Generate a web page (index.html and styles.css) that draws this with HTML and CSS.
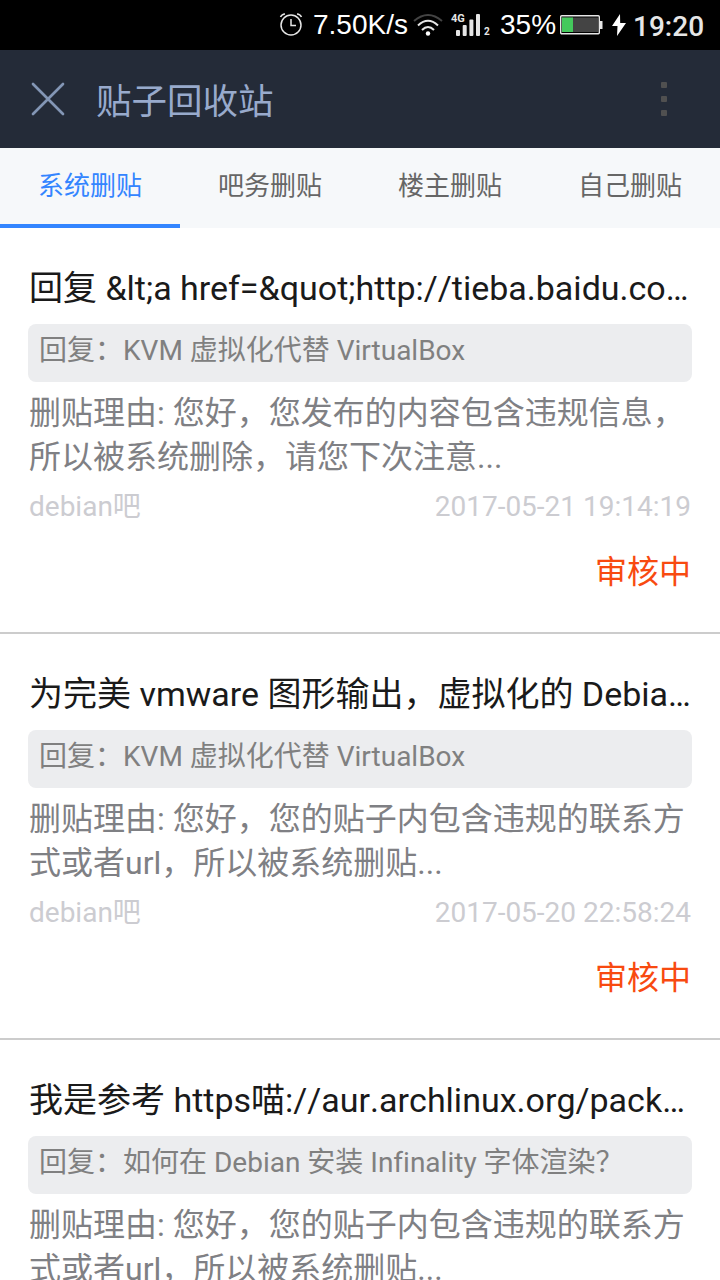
FILE: index.html
```html
<!DOCTYPE html>
<html lang="zh-CN">
<head>
<meta charset="utf-8">
<title>贴子回收站</title>
<link rel="stylesheet" href="styles.css">
</head>
<body>
<div class="screen">
  <div class="status-bar">
    <svg class="alarm" width="24" height="24" viewBox="0 0 24 24" fill="none" stroke="#e6e6e6" stroke-width="1.5"><circle cx="12" cy="13" r="10"/><path d="M12 7v6.500h5M1.500 5Q3 1.800 6 1.900M22.500 5Q21 1.800 18 1.900"/></svg>
    <span class="speed">7.50K/s</span>
    <svg class="wifi" width="30" height="24" viewBox="0 0 30 24" fill="none" stroke-width="2"><path d="M1 8Q15-4 29 8" stroke="#444"/><path d="M5 12.500Q15 3 25 12.500M9 17Q15 11 21 17" stroke="#e6e6e6"/><circle cx="15" cy="20.500" r="2.200" fill="#fff"/></svg>
    <span class="signal">
      <span class="network">4G</span>
      <svg width="24" height="22" viewBox="0 0 24 22" fill="#e6e6e6"><rect x="0" y="16" width="4" height="6" rx="1"/><rect x="6.700" y="11" width="4" height="11" rx="1"/><rect x="13.400" y="5.500" width="4" height="16.500" rx="1"/><rect x="20" y="0" width="4" height="22" rx="1"/></svg>
      <span class="sim">2</span>
    </span>
    <span class="percent">35%</span>
    <svg class="battery" width="43" height="20" viewBox="0 0 43 20"><rect x=".7" y=".7" width="38.600" height="18.100" rx="1" fill="#000" stroke="#e6e6e6" stroke-width="1.400"/><rect x="2" y="2.500" width="36" height="14.500" fill="#444"/><rect x="2" y="2.500" width="11" height="14.500" fill="#44c95c"/><rect x="39.500" y="6" width="3" height="8" fill="#e6e6e6"/></svg>
    <svg class="bolt" width="14" height="24" viewBox="0 0 14 24" fill="#fff"><path d="M8 1 0 13h5.500L5 23l9-13H8.200z"/></svg>
    <span class="clock">19:20</span>
  </div>
  <header class="header">
    <svg class="close" width="34" height="34" viewBox="0 0 34 34" fill="none" stroke="#8396b5" stroke-width="2.700" stroke-linecap="round"><path d="M2 2 32 32M32 2 2 32"/></svg>
    <h1 class="heading">贴子回收站</h1>
    <svg class="more" width="6" height="34" viewBox="0 0 6 34" fill="#505050"><rect width="6" height="6" rx="1"/><rect y="14" width="6" height="6" rx="1"/><rect y="28" width="6" height="6" rx="1"/></svg>
  </header>
  <nav class="tabs">
    <div class="tab active">系统删贴</div>
    <div class="tab">吧务删贴</div>
    <div class="tab">楼主删贴</div>
    <div class="tab">自己删贴</div>
  </nav>
  <main>
    <article class="item">
      <h2 class="title">回复 &amp;lt;a href=&amp;quot;<span class="url">http://tieba.baidu.co…</span></h2>
      <div class="source">回复：KVM 虚拟化代替 VirtualBox</div>
      <p class="reason">删贴理由: 您好，您发布的内容包含违规信息，<br>所以被系统删除，请您下次注意...</p>
      <div class="meta"><span>debian吧</span><span>2017-05-21 19:14:19</span></div>
      <div class="state">审核中</div>
    </article>
    <article class="item">
      <h2 class="title">为完美 vmware 图形输出，虚拟化的 Debia…</h2>
      <div class="source">回复：KVM 虚拟化代替 VirtualBox</div>
      <p class="reason">删贴理由: 您好，您的贴子内包含违规的联系方<br>式或者url，所以被系统删贴...</p>
      <div class="meta"><span>debian吧</span><span>2017-05-20 22:58:24</span></div>
      <div class="state">审核中</div>
    </article>
    <article class="item">
      <h2 class="title">我是参考 <span class="url">https喵://aur.archlinux.org/pack…</span></h2>
      <div class="source">回复：如何在 Debian 安装 Infinality 字体渲染？</div>
      <p class="reason">删贴理由: 您好，您的贴子内包含违规的联系方<br>式或者url，所以被系统删贴...</p>
    </article>
  </main>
</div>
</body>
</html>
```
FILE: styles.css
```css
* { box-sizing: border-box; }
body { margin: 0; background: #fff; font-family: Roboto, "Noto Sans CJK SC", sans-serif; font-variant-ligatures: none; }
.screen { width: 720px; height: 1280px; overflow: hidden; }
h1, h2, p { margin: 0; font-weight: 400; white-space: nowrap; }

.status-bar { display: flex; align-items: flex-start; height: 50px; padding-left: 279px; background: #000; color: #fff; white-space: nowrap; }
.status-bar svg { display: block; flex: none; }
.alarm { margin-top: 12px; }
.speed { width: 93px; margin: 8px 0 0 10px; font: 28px/34px "Liberation Sans", sans-serif; }
.wifi { margin: 13px 0 0 7px; }
.signal { display: flex; flex: none; width: 39px; margin: 14px 0 0 8px; }
.network { width: 14px; height: 10px; margin-right: -9px; font: bold 11px/10px Roboto, sans-serif; color: #e6e6e6; }
.sim { margin: 13px 0 0 4px; font: bold 10px/10px Roboto, sans-serif; color: #e6e6e6; }
.percent { width: 56px; margin: 8px 0 0 10px; font: 28px/34px "Liberation Sans", sans-serif; }
.battery { margin: 15px 0 0 4px; }
.bolt { margin: 13px 0 0 9px; }
.clock { margin: 10px 0 0 7px; font-size: 28px; line-height: 34px; font-weight: 500; color: #e6e6e6; }

.header { display: flex; align-items: center; height: 98px; padding: 0 53px 0 31px; background: #242b38; }
.heading { margin: 6px auto 0 31px; font-size: 35.500px; line-height: 50px; color: #98aacc; }

.tabs { display: grid; grid-template-columns: repeat(4, 1fr); height: 80px; background: #f6f8fa; }
.tab { padding-top: 19px; text-align: center; font-size: 26px; line-height: 38px; color: #666; }
.tab.active { color: #3385ff; border-bottom: 4px solid #3385ff; }

.item { height: 406px; padding: 36px 28px 0; border-bottom: 2px solid #ccc; }
.title { height: 48px; margin-bottom: 12px; padding-left: 1px; font-size: 34px; line-height: 48px; color: #1a1a1a; }
.url { font-kerning: none; }
.source { height: 58px; margin-bottom: 9px; padding: 7px 11px; border-radius: 8px; background: #ecedef; font-size: 28px; line-height: 40px; color: #808080; }
.reason { padding-left: 1px; font-size: 32px; line-height: 44px; color: #7f8084; }
.meta { display: flex; justify-content: space-between; margin-top: 8px; padding: 0 1px; font-size: 28px; line-height: 40px; color: #ccccd1; }
.state { margin-top: 21px; padding-right: 1px; text-align: right; font-size: 32px; line-height: 48px; color: #f84a10; }
```
